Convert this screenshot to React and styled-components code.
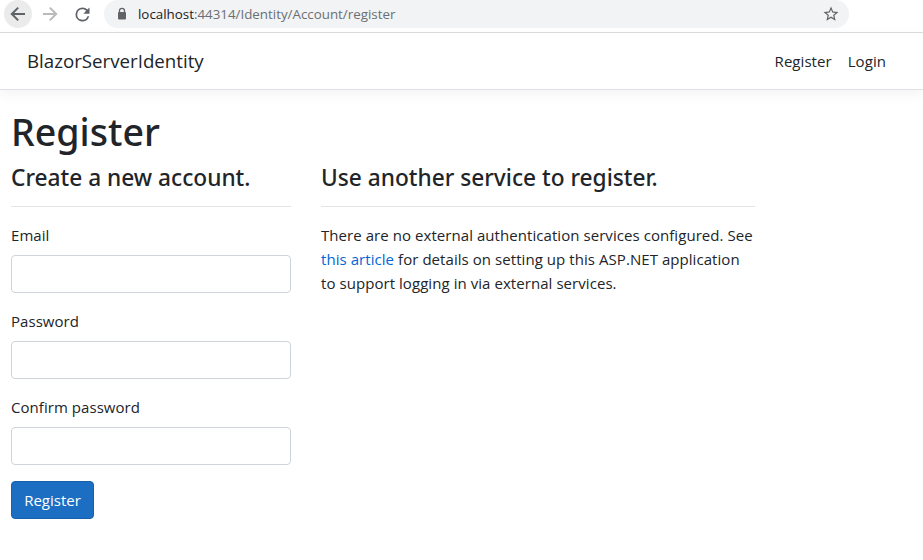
import React from 'react';
import styled, { createGlobalStyle } from 'styled-components';

const Global = createGlobalStyle`
  *, *::before, *::after { box-sizing: border-box; }
  body {
    margin: 0;
    background: #fff;
    color: #212529;
    font: 400 15px/24px 'Open Sans', 'Noto Sans', sans-serif;
    overflow: hidden;
  }
`;

const BrowserBar = styled.div`
  display: flex;
  align-items: flex-start;
  height: 33px;
  border-bottom: 1px solid #dadce0;
  padding-left: 4px;
`;

const ToolButton = styled.span`
  display: flex;
  flex: none;
  align-items: center;
  justify-content: center;
  width: 28px;
  height: 28px;
  margin-right: ${(p) => p.$gap || 0}px;
  border-radius: 50%;
  background: ${(p) => (p.$active ? '#ebebec' : 'transparent')};
  color: ${(p) => (p.$muted ? '#bababc' : '#5f6368')};
`;

const AddressBar = styled.div`
  display: flex;
  align-items: center;
  width: 745px;
  height: 28px;
  padding: 0 9px 0 12px;
  border-radius: 0 0 14px 14px;
  border-radius: 14px;
  background: #f1f3f4;
  color: #5f6368;
`;

const Url = styled.span`
  flex: 1;
  margin-left: 10px;
  font-size: 13.35px;
  line-height: 28px;
  color: #6b6f73;
`;

const Host = styled.span`
  color: #202124;
`;

const NavBar = styled.header`
  display: flex;
  align-items: center;
  height: 57px;
  padding: 0 37px 0 27px;
  border-bottom: 1px solid #dee2e6;
  box-shadow: 0 4px 12px rgba(0, 0, 0, 0.05);
`;

const Brand = styled.span`
  flex: 1;
  font-size: 18.7px;
  line-height: 30px;
`;

const NavLink = styled.span`
  margin-left: 16px;
  letter-spacing: 0.06px;
`;

const Main = styled.main`
  padding: 18px 11px 0;
`;

const Title = styled.h1`
  margin: 0 0 8px;
  font: 500 37.6px/48px 'Noto Sans', sans-serif;
`;

const Columns = styled.div`
  display: grid;
  grid-template-columns: 280px 434px;
  column-gap: 30px;
  align-items: start;
`;

const SectionTitle = styled.h2`
  height: 43px;
  margin: 0 0 16px;
  border-bottom: 1px solid #e3e4e5;
  font: 500 22.7px/28px 'Noto Sans', sans-serif;
  white-space: nowrap;
`;

const Field = styled.label`
  display: grid;
  row-gap: 8px;
  margin-bottom: 16px;
  letter-spacing: 0.05px;
`;

const Input = styled.input`
  width: 100%;
  height: 38px;
  padding: 6px 12px;
  border: 1px solid #ced4da;
  border-radius: 4px;
  background: #fff;
  font: inherit;
`;

const SubmitButton = styled.button`
  display: block;
  width: 83px;
  height: 38px;
  padding: 0;
  border: 1px solid #1861ac;
  border-radius: 4px;
  background: #1b6ec2;
  color: #fff;
  font: inherit;
`;

const Paragraph = styled.p`
  margin: 0;
  letter-spacing: 0.06px;
`;

const Line = styled.span`
  display: block;
  white-space: nowrap;
`;

const Link = styled.a`
  color: #0366d6;
`;

const BackIcon = () => (
  <svg width="28" height="28" viewBox="0 0 28 28" fill="none" stroke="currentColor" strokeWidth="2">
    <path d="M21 14H8.5M14.2 7.6 7.8 14l6.4 6.4" />
  </svg>
);

const ForwardIcon = () => (
  <svg width="28" height="28" viewBox="0 0 28 28" fill="none" stroke="currentColor" strokeWidth="2">
    <path d="M7 14h12.5M13.8 7.6l6.4 6.4-6.4 6.4" />
  </svg>
);

const ReloadIcon = () => (
  <svg width="21" height="21" viewBox="0 0 24 24" fill="currentColor">
    <path d="M17.65 6.35A7.96 7.96 0 0 0 12 4a8 8 0 1 0 7.73 10h-2.08A6 6 0 1 1 12 6c1.66 0 3.14.69 4.22 1.78L13 11h7V4z" />
  </svg>
);

const LockIcon = () => (
  <svg width="12" height="14" viewBox="0 0 12 14">
    <path d="M3.5 6V3.8a2.5 2.5 0 0 1 5 0V6" fill="none" stroke="currentColor" strokeWidth="1.3" />
    <rect x="2" y="5" width="8" height="7.5" rx="1" fill="currentColor" />
  </svg>
);

const StarIcon = () => (
  <svg width="18" height="18" viewBox="0 0 24 24" fill="currentColor">
    <path d="m22 9.24-7.19-.62L12 2 9.19 8.63 2 9.24l5.46 4.73L5.82 21 12 17.27 18.18 21l-1.63-7.03zM12 15.4l-3.76 2.27 1-4.28-3.32-2.88 4.38-.38L12 6.1l1.71 4.04 4.38.38-3.32 2.88 1 4.28z" />
  </svg>
);

const ProfileIcon = () => (
  <svg width="21" height="21" viewBox="0 0 24 24" fill="currentColor">
    <path d="M12 2a10 10 0 1 0 0 20 10 10 0 0 0 0-20m0 3a3 3 0 1 1 0 6 3 3 0 0 1 0-6m0 14.2a7.2 7.2 0 0 1-6-3.22c.03-1.99 4-3.08 6-3.08s5.97 1.09 6 3.08a7.2 7.2 0 0 1-6 3.22" />
  </svg>
);

const MenuIcon = () => (
  <svg width="4" height="16" viewBox="0 0 4 16" fill="currentColor">
    <circle cx="2" cy="3" r="1.5" />
    <circle cx="2" cy="8" r="1.5" />
    <circle cx="2" cy="13" r="1.5" />
  </svg>
);

const fields = [
  { label: 'Email', type: 'email' },
  { label: 'Password', type: 'password' },
  { label: 'Confirm password', type: 'password' },
];

export default function App() {
  return (
    <>
      <Global />
      <BrowserBar>
        <ToolButton $active $gap={4}><BackIcon /></ToolButton>
        <ToolButton $muted $gap={4}><ForwardIcon /></ToolButton>
        <ToolButton $gap={8}><ReloadIcon /></ToolButton>
        <AddressBar>
          <LockIcon />
          <Url><Host>localhost</Host>:44314/Identity/Account/register</Url>
          <StarIcon />
        </AddressBar>
        <ToolButton $gap={4}><span /></ToolButton>
      </BrowserBar>
      <NavBar>
        <Brand>BlazorServerIdentity</Brand>
        <NavLink>Register</NavLink>
        <NavLink>Login</NavLink>
      </NavBar>
      <Main>
        <Title>Register</Title>
        <Columns>
          <form>
            <SectionTitle>Create a new account.</SectionTitle>
            {fields.map(({ label, type }) => (
              <Field key={label}>
                {label}
                <Input type={type} />
              </Field>
            ))}
            <SubmitButton type="button">Register</SubmitButton>
          </form>
          <section>
            <SectionTitle>Use another service to register.</SectionTitle>
            <Paragraph>
              <Line>There are no external authentication services configured. See</Line>
              <Line><Link>this article</Link> for details on setting up this ASP.NET application</Line>
              <Line>to support logging in via external services.</Line>
            </Paragraph>
          </section>
        </Columns>
      </Main>
    </>
  );
}
